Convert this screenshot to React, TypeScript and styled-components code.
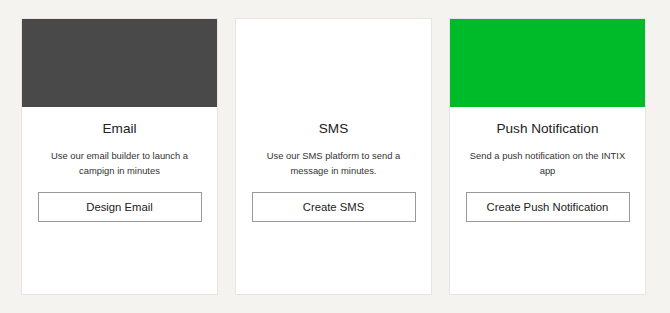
import React from "react";
import styled, { createGlobalStyle } from "styled-components";

const GlobalStyle = createGlobalStyle`
    html, body {
        margin: 0;
        padding: 0;
        background: #f4f3ef;
        font-family: "Liberation Sans", Arial, sans-serif;
    }
`;

const Page = styled.div`
    display: flex;
    gap: 17px;
    padding: 18px 24px 18px 21px;
`;

const Card = styled.div`
    width: 197px;
    height: 277px;
    box-sizing: border-box;
    background: #fff;
    border: 1px solid #e6e5e1;
    display: flex;
    flex-direction: column;
    align-items: center;
`;

const Banner = styled.div<{ $color: string }>`
    width: 100%;
    height: 88px;
    background: ${(p) => p.$color};
`;

const Title = styled.h3`
    margin: 13px 0 0 0;
    font-size: 13.6px;
    font-weight: normal;
    line-height: 17px;
    color: #222;
`;

const Description = styled.p`
    margin: 11px 14px 0 14px;
    font-size: 9.4px;
    line-height: 15px;
    color: #333;
    text-align: center;
`;

const Button = styled.button`
    margin-top: 14px;
    width: 164px;
    height: 30px;
    background: #fff;
    border: 1px solid #999;
    font-family: inherit;
    font-size: 11.3px;
    color: #222;
`;

const channels = [
    {
        color: "#494949",
        title: "Email",
        text: "Use our email builder to launch a campign in minutes",
        action: "Design Email",
    },
    {
        color: "#fff",
        title: "SMS",
        text: "Use our SMS platform to send a message in minutes.",
        action: "Create SMS",
    },
    {
        color: "#00bb29",
        title: "Push Notification",
        text: "Send a push notification on the INTIX app",
        action: "Create Push Notification",
    },
];

const App = () => (
    <>
        <GlobalStyle />
        <Page>
            {channels.map(({ color, title, text, action }) => (
                <Card key={title}>
                    <Banner $color={color} />
                    <Title>{title}</Title>
                    <Description>{text}</Description>
                    <Button>{action}</Button>
                </Card>
            ))}
        </Page>
    </>
);

export default App;
